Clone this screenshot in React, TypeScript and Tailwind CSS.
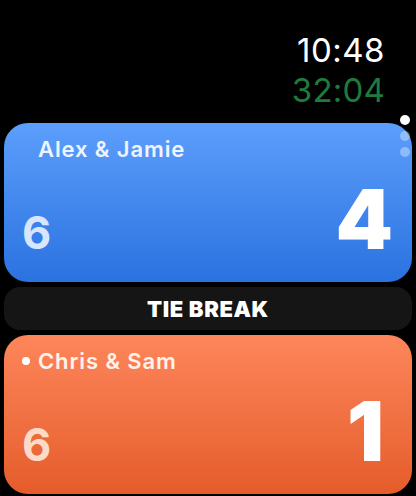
import React from 'react';

interface TeamCardProps {
  name: string;
  games: number;
  points: number;
  serving?: boolean;
  tone: 'blue' | 'orange';
}

function TeamCard({ name, games, points, serving = false, tone }: TeamCardProps) {
  const bg =
    tone === 'blue'
      ? 'bg-gradient-to-b from-[#5c9efc] to-[#2a72e0]'
      : 'bg-gradient-to-b from-[#fd865a] to-[#e55c29]';
  const sub = tone === 'blue' ? 'text-[#d7e6fc]' : 'text-[#fcdaca]';

  return (
    <div className={`mx-1 h-[159px] shrink-0 rounded-[24px] ${bg} flex flex-col`}>
      <div className="flex items-center h-[20px] mt-[16px] pl-[18px]">
        <span className={`w-[8px] h-[8px] rounded-full mr-[8px] ${serving ? 'bg-white' : 'bg-transparent'}`} />
        <span className="text-[22px] font-semibold tracking-[0.9px] text-white/90 leading-none">{name}</span>
      </div>
      <div className="flex-1" />
      <div className="flex items-baseline justify-between pl-[18px] pr-[19px] pb-[21px]">
        <span className={`text-[45px] font-bold leading-none ${sub}`}>{games}</span>
        <span className={`text-[82px] font-black leading-none text-white ${points === 1 ? 'mr-[9px]' : ''}`}>{points}</span>
      </div>
    </div>
  );
}

export default function App() {
  return (
    <div
      className="relative w-[416px] h-[496px] overflow-hidden bg-black flex flex-col"
      style={{ fontFamily: 'Inter, "Noto Sans", sans-serif' }}
    >
      <div className="flex flex-col items-end pr-[31px] pt-[30px] pb-[13px]">
        <div className="text-[33px] leading-[40px] text-white tracking-[0.5px]">10:48</div>
        <div className="text-[33px] leading-[40px] text-[#1f7a3d] tracking-[0.2px]">32:04</div>
      </div>

      <TeamCard name="Alex & Jamie" games={6} points={4} tone="blue" />

      <div className="mx-1 my-[5px] h-[43px] shrink-0 rounded-[16px] bg-[#151515] flex items-center justify-center">
        <span className="text-[22px] font-black tracking-[0.6px] text-white leading-none">TIE BREAK</span>
      </div>

      <TeamCard name="Chris & Sam" games={6} points={1} serving tone="orange" />

      {/* page indicator */}
      <div className="absolute right-[6px] top-[115px] flex flex-col items-center gap-[6px]">
        <span className="w-[10px] h-[10px] rounded-full bg-white" />
        <span className="w-[10px] h-[10px] rounded-full bg-white/35" />
        <span className="w-[10px] h-[10px] rounded-full bg-white/35" />
      </div>
    </div>
  );
}
